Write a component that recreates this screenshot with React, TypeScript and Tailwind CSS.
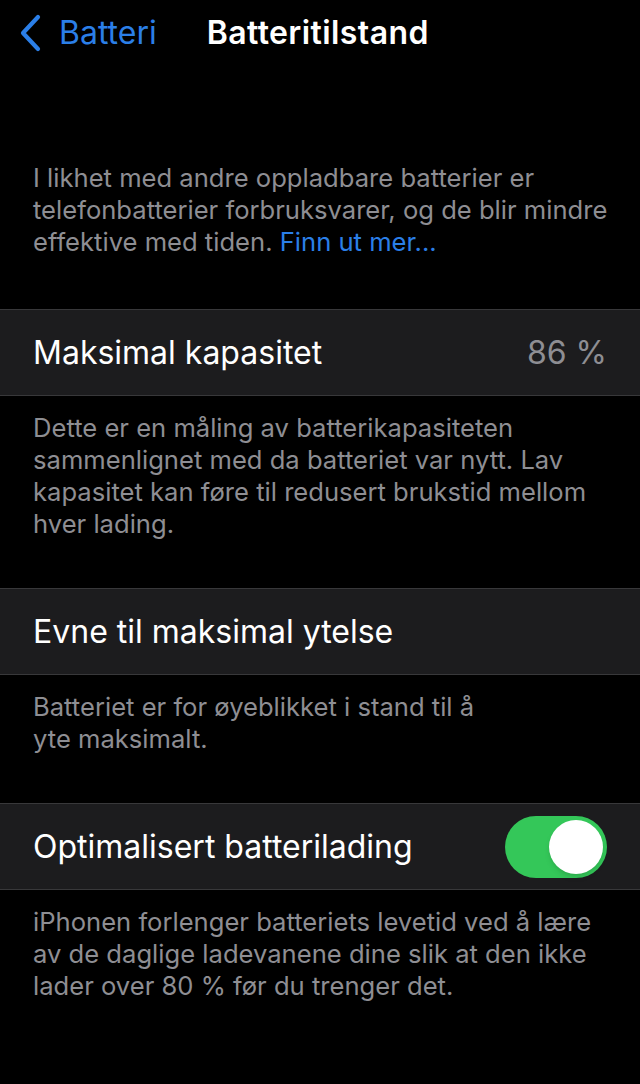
import React from 'react';

const Row: React.FC<{ label: string; children?: React.ReactNode }> = ({ label, children }) => (
  <div className="h-[87px] bg-[#1c1c1e] border-y border-[#38383a] flex items-center justify-between pl-[33px] pr-[33px]">
    <span className="text-[32px] text-white">{label}</span>
    {children}
  </div>
);

const Note: React.FC<{ children: React.ReactNode }> = ({ children }) => (
  <p className="px-[33px] pt-[16px] text-[25.6px] leading-[32px] text-[#8e8e93] whitespace-nowrap">{children}</p>
);

const App: React.FC = () => {
  return (
    <div className="min-h-screen w-[640px] bg-black font-['Inter',sans-serif] overflow-hidden">
      <div className="h-[66px] flex items-center">
        <div className="flex items-center pl-[18px] text-[#2b7fe8]">
          <svg width="24" height="38" viewBox="0 0 24 38" fill="none">
            <path d="M20 3 L5 19 L20 35" stroke="currentColor" strokeWidth="4.2" strokeLinecap="round" strokeLinejoin="round" />
          </svg>
          <span className="ml-[17px] text-[32px]">Batteri</span>
        </div>
        <span className="ml-[50px] text-[32px] font-semibold text-white tracking-[0.4px]">Batteritilstand</span>
      </div>

      <p className="pl-[33px] pt-[96px] text-[25.6px] leading-[32px] text-[#8e8e93] whitespace-nowrap">
        I likhet med andre oppladbare batterier er<br />
        telefonbatterier forbruksvarer, og de blir mindre<br />
        effektive med tiden. <span className="text-[#2b7fe8]">Finn ut mer...</span>
      </p>

      <div className="mt-[51px]">
        <Row label="Maksimal kapasitet">
          <span className="text-[32px] text-[#8e8e93]">86 %</span>
        </Row>
      </div>
      <Note>
        Dette er en måling av batterikapasiteten<br />
        sammenlignet med da batteriet var nytt. Lav<br />
        kapasitet kan føre til redusert brukstid mellom<br />
        hver lading.
      </Note>

      <div className="mt-[48px]">
        <Row label="Evne til maksimal ytelse" />
      </div>
      <Note>
        Batteriet er for øyeblikket i stand til å<br />
        yte maksimalt.
      </Note>

      <div className="mt-[48px]">
        <Row label="Optimalisert batterilading">
          <div className="w-[102px] h-[62px] rounded-full bg-[#34c759] flex items-center justify-end pr-[4px]">
            <div className="w-[54px] h-[54px] rounded-full bg-white shadow-md" />
          </div>
        </Row>
      </div>
      <Note>
        iPhonen forlenger batteriets levetid ved å lære<br />
        av de daglige ladevanene dine slik at den ikke<br />
        lader over 80 % før du trenger det.
      </Note>
    </div>
  );
};

export default App;
